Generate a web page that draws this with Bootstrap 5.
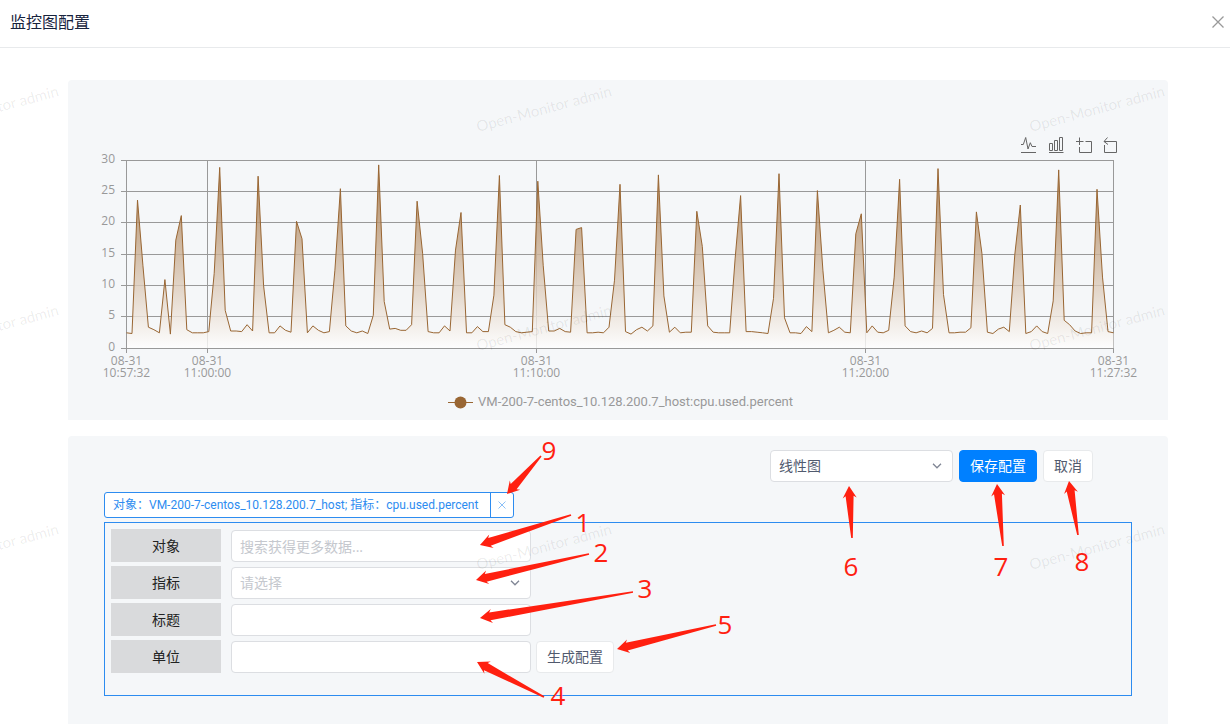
<!DOCTYPE html>
<html lang="zh-CN">
<head>
<meta charset="utf-8">
<meta name="viewport" content="width=device-width, initial-scale=1">
<title>监控图配置</title>
<link href="https://cdn.jsdelivr.net/npm/bootstrap@5.3.0/dist/css/bootstrap.min.css" rel="stylesheet">
<style>
  body { font-family: "Open Sans", "Noto Sans CJK SC", sans-serif; font-size: 14px; line-height: 20px; color: #17233d; overflow-x: hidden; }
  .page-head { height: 48px; padding: 0 4px 4px 10px; border-bottom: 1px solid #e8eaec; }
  .page-title { font-size: 16px; font-weight: 400; line-height: 24px; }
  .icon-btn { border: 0; padding: 0; background: none; display: block; line-height: 0; }
  .page-body { padding: 32px 62px 0 68px; gap: 16px; }
  .panel { background: #f5f7f9; border-radius: 4px 4px 0 0; }
  .chart text { font-size: 12px; fill: #999; }
  .chart .legend-text { font-family: Roboto, sans-serif; font-size: 13px; }
  .chart-tools { top: 55px; right: 45px; }
  .config { padding: 14px 36px 28px; }
  .config-actions { gap: 6px; padding-right: 39px; margin-bottom: 10px; }
  .field { height: 32px; padding: 4px 8px; font-size: 14px; line-height: 20px; border-color: #dcdee2; border-radius: 4px; color: #515a6e; width: 300px; }
  .field::placeholder, .field.is-empty { color: #c5c8ce; }
  select.field { background: #fff url("data:image/svg+xml,%3Csvg xmlns='http://www.w3.org/2000/svg' width='10' height='6' fill='none' stroke='%23808695' stroke-width='1.3'%3E%3Cpath d='M1 .8 5 4.8 9 .8'/%3E%3C/svg%3E") no-repeat right 10px center; }
  .field.type-select { width: 183px; }
  .action-btn { height: 32px; padding: 4px 10px; font-size: 14px; line-height: 22px; border-radius: 4px; }
  .action-btn.plain { background: #fff; border-color: #e8eaec; color: #515a6e; }
  .action-btn.main { background: #0080ff; border-color: #0080ff; color: #fff; }
  .metric-tag { width: fit-content; height: 26px; border: 1px solid #2d8cf0; border-radius: 3px; background: #fff; color: #2d8cf0; font-family: Roboto, "Noto Sans CJK SC", sans-serif; font-size: 12px; line-height: 24px; margin-bottom: 4px; }
  .metric-tag span { padding: 0 12px 0 8px; }
  .metric-tag .icon-btn { width: 23px; border-left: 1px solid #2d8cf0; }
  .metric-form { border: 1px solid #2d8cf0; padding: 6px 6px 22px; gap: 4px; }
  .form-line { gap: 10px; }
  .unit-line { gap: 5px; }
  .form-name { width: 110px; height: 33px; line-height: 33px; background: #d9dadc; text-align: center; color: #222; }
  .overlay { pointer-events: none; }
  .marks { fill: #ff2010; font-size: 26px; }
  .watermark text { font-family: Lato, sans-serif; font-size: 15px; fill: #000; fill-opacity: .08; }
</style>
</head>
<body class="position-relative min-vh-100 d-flex flex-column">
<header class="page-head d-flex align-items-center justify-content-between">
  <h1 class="page-title m-0">监控图配置</h1>
  <button type="button" class="icon-btn" aria-label="关闭">
    <svg width="16" height="16" fill="none" stroke="#999" stroke-width="1.3"><path d="M2.500 2.500 13.500 13.500M13.500 2.500 2.500 13.500"/></svg>
  </button>
</header>

<main class="page-body d-flex flex-column flex-grow-1">
  <section class="panel position-relative">
    <div class="chart-tools position-absolute d-flex">
      <button type="button" class="icon-btn" aria-label="折线图"><svg width="27" height="20" viewBox="1015 135 27 20" fill="none" stroke="#666"><path d="M1021 144.500H1023.300L1025.700 137.500 1028 149 1030.300 142.700 1032 146.500H1036M1021 152.500H1036"/></svg></button>
      <button type="button" class="icon-btn" aria-label="柱状图"><svg width="27" height="20" viewBox="1042 135 27 20" fill="none" stroke="#666"><path d="M1049.500 143.500h3v7h-3zM1054.500 140.500h3v10h-3zM1059.500 137.500h3v13h-3zM1049 152.500h14.500"/></svg></button>
      <button type="button" class="icon-btn" aria-label="区域缩放"><svg width="27" height="20" viewBox="1069 135 27 20" fill="none" stroke="#666"><path d="M1076 141.500h7.500M1079.500 137.500v7.500M1085.500 141.500h6v11h-12V147"/></svg></button>
      <button type="button" class="icon-btn" aria-label="缩放还原"><svg width="27" height="20" viewBox="1096 135 27 20" fill="none" stroke="#666"><path d="M1107.500 137.500 1104 141.500 1108 144.500M1104 141.500h12.500v11h-12V145"/></svg></button>
    </div>
    <svg class="chart d-block w-100" viewBox="68 80 1100 340">
      <defs>
        <linearGradient id="area" x1="0" y1="0" x2="0" y2="1">
          <stop offset="0" stop-color="#996633" stop-opacity=".8"/>
          <stop offset="1" stop-color="#fff" stop-opacity=".8"/>
        </linearGradient>
      </defs>
      <g id="grid" stroke="#999" shape-rendering="crispEdges"></g>
      <path id="fill" fill="url(#area)"/>
      <path d="M126.500 160V348.500H1114" fill="none" stroke="#999" shape-rendering="crispEdges"/>
      <path id="line" fill="none" stroke="#996633" stroke-linejoin="bevel"/>
      <g id="labels"></g>
      <path d="M448 402.500h25" stroke="#996633"/>
      <circle cx="460.500" cy="402.500" r="6" fill="#996633"/>
      <text class="legend-text" x="478" y="406">VM-200-7-centos_10.128.200.7_host:cpu.used.percent</text>
    </svg>
  </section>

  <section class="panel config position-relative flex-grow-1">
    <div class="config-actions d-flex justify-content-end">
      <select class="form-select field type-select" aria-label="图表类型"><option>线性图</option></select>
      <button type="button" class="btn action-btn main">保存配置</button>
      <button type="button" class="btn action-btn plain">取消</button>
    </div>
    <div class="metric-tag d-flex">
      <span>对象：VM-200-7-centos_10.128.200.7_host; 指标：cpu.used.percent</span>
      <button type="button" class="icon-btn" aria-label="移除"><svg width="8" height="8" stroke="#8cc0f7"><path d="M.5.5l7 7M7.500.5l-7 7"/></svg></button>
    </div>
    <form class="metric-form d-flex flex-column">
      <div class="form-line d-flex align-items-end">
        <label class="form-name" for="endpoint">对象</label>
        <input id="endpoint" class="form-control field" type="text" placeholder="搜索获得更多数据...">
      </div>
      <div class="form-line d-flex align-items-end">
        <label class="form-name" for="metric">指标</label>
        <select id="metric" class="form-select field is-empty"><option>请选择</option></select>
      </div>
      <div class="form-line d-flex align-items-end">
        <label class="form-name" for="caption">标题</label>
        <input id="caption" class="form-control field" type="text">
      </div>
      <div class="form-line d-flex align-items-end">
        <label class="form-name" for="unit">单位</label>
        <div class="unit-line d-flex">
          <input id="unit" class="form-control field" type="text">
          <button type="button" class="btn action-btn plain">生成配置</button>
        </div>
      </div>
    </form>
    <svg id="marks" class="marks overlay position-absolute top-0 start-0" width="1100" height="288" viewBox="68 436 1100 288" text-anchor="middle"></svg>
  </section>
</main>

<svg id="watermark" class="watermark overlay position-absolute top-0 start-0 w-100 h-100" aria-hidden="true"></svg>

<script src="https://cdn.jsdelivr.net/npm/bootstrap@5.3.0/dist/js/bootstrap.bundle.min.js"></script>
<script>
  // CPU usage, one sample every ten seconds over half an hour
  const cpu = [
    2.5,2.4,23.7,13.3,3.4,3,2.5,11,2.3,17.3,21.2,3,2.5,2.5,2.5,2.7,12,28.9,6.1,2.8,
    2.8,2.7,3.8,2.8,27.5,10,2.5,2.5,3.6,2.9,2.6,20.3,17.5,2.5,3.6,2.9,2.5,2.7,12.5,25.5,
    3.6,2.8,2.5,2.8,2.4,5.3,29.3,7.5,3.1,3.2,2.9,2.9,3.8,23.5,15.2,2.7,2.5,2.5,3.6,2.8,
    15.7,21.7,2.5,2.5,3.5,2.7,2.7,8.5,27.6,3.8,3.4,2.7,2.5,2.6,2.7,26.7,13.3,2.8,2.8,3.2,
    2.7,2.6,19,19.3,2.5,2.5,2.6,2.5,3.4,10.9,26.2,2.7,2.3,3,3.4,2.8,3.6,27.7,8.4,2.6,
    3.4,2.5,2.6,2.6,21.9,16.3,3.6,2.6,2.5,2.5,2.5,14.3,24.4,2.7,2.7,2.6,2.5,2.4,8,27.9,
    4.9,2.5,2.5,2.4,3.5,2.7,25.2,12.5,2.5,2.9,3.4,2.6,2.5,18.3,21.5,2.5,3.6,2.6,2.5,2.9,
    11.4,27,3.6,2.7,2.5,2.8,2.5,3.2,28.7,8.6,2.5,2.5,2.6,2.6,3.3,21.8,15.2,2.6,2.4,3.1,
    3.4,2.7,15,22.9,2.4,2.7,3.6,2.7,2.4,7.6,28.5,4.5,3.8,2.8,2.4,2.5,2.5,25.4,11.4,2.7,2.5
  ];
  const $ = id => document.getElementById(id);
  const X = k => 126.5 + k * 987 / 180, Y = v => 348.5 - v * 188 / 30;
  const pts = cpu.map((v, k) => X(k).toFixed(1) + ' ' + Y(v).toFixed(1)).join('L');
  $('line').setAttribute('d', 'M' + pts);
  $('fill').setAttribute('d', 'M' + pts + `L${X(180)} ${Y(0)}L${X(0)} ${Y(0)}Z`);

  let grid = '', labels = '';
  for (let v = 0; v <= 30; v += 5) {
    const y = Math.floor(Y(v) - 0.49) + 0.5;
    grid += `<path d="M121 ${y}H1114"/>`;
    labels += `<text x="115" y="${y + 2.5}" text-anchor="end">${v}</text>`;
  }
  [[126.5, '10:57:32'], [207.5, '11:00:00'], [536.5, '11:10:00'], [865.5, '11:20:00'], [1113.5, '11:27:32']].forEach(([x, t]) => {
    grid += `<path d="M${x} 160V353"/>`;
    labels += `<g text-anchor="middle"><text x="${x}" y="365">08-31</text><text x="${x}" y="377">${t}</text></g>`;
  });
  $('grid').innerHTML = grid;
  $('labels').innerHTML = labels;

  // Numbered callouts: number, its centre and baseline, arrow tip, arrow tail
  const callouts = [
    [1, 583, 532, 480, 545, 571, 515], [2, 601, 562, 476, 580, 589, 554], [3, 645, 598, 480, 618, 633, 592],
    [4, 558, 705, 477, 662, 544, 697], [5, 725, 634, 617, 649, 716, 625], [6, 851, 576, 849, 486, 852, 538],
    [7, 1001, 576, 997, 484, 1003, 546], [8, 1082, 571, 1069, 481, 1078, 535], [9, 549, 460, 507, 494, 541, 456]
  ];
  $('marks').innerHTML = callouts.map(([n, cx, by, x1, y1, x2, y2]) => {
    const len = Math.hypot(x2 - x1, y2 - y1), ux = (x2 - x1) / len, uy = (y2 - y1) / len;
    const at = (d, w) => (x1 + ux * d - uy * w).toFixed(1) + ',' + (y1 + uy * d + ux * w).toFixed(1);
    const shape = [at(0, 0), at(12, 7), at(10, 4), at(len, 0.8), at(len, -0.8), at(10, -4), at(12, -7)];
    return `<polygon points="${shape.join(' ')}"/><text x="${cx}" y="${by}">${n}</text>`;
  }).join('');

  let wm = '';
  for (let y = 132; y < 724; y += 219)
    for (let x = -75; x < innerWidth; x += 553)
      wm += `<text transform="translate(${x} ${y}) rotate(-15)">Open-Monitor admin</text>`;
  $('watermark').innerHTML = wm;
</script>
</body>
</html>
